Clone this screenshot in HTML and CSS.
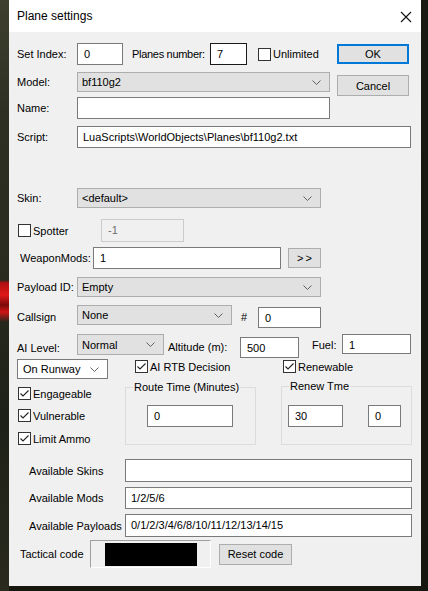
FILE: index.html
```html
<!DOCTYPE html>
<html>
<head>
<meta charset="utf-8">
<title>Plane settings</title>
<link rel="stylesheet" href="styles.css">
</head>
<body>
<div class="dialog">
  <div class="titlebar">
    <span class="title">Plane settings</span>
    <svg class="close" width="12" height="12" viewBox="0 0 12 12"><path d="M1 1 L11 11 M11 1 L1 11" stroke="#111" stroke-width="1.1" fill="none"/></svg>
  </div>
  <div class="content">
    <div class="row r-index">
      <span class="lbl w60">Set Index:</span>
      <div class="edit w46">0</div>
      <span class="lbl ml9 w78 tight">Planes number:</span>
      <div class="edit focus w37">7</div>
      <span class="chk ml11"></span><span class="lbl chklbl">Unlimited</span>
      <div class="btn default">OK</div>
    </div>
    <div class="row r-model">
      <span class="lbl w60">Model:</span>
      <div class="combo w253"><span>bf110g2</span><svg class="chev" width="9" height="5" viewBox="0 0 9 5"><path d="M0.5 0.5 L4.5 4.5 L8.5 0.5" stroke="#606060" fill="none"/></svg></div>
      <div class="btn cancel">Cancel</div>
    </div>
    <div class="row r-name">
      <span class="lbl w60">Name:</span>
      <div class="edit w253"></div>
    </div>
    <div class="row r-script">
      <span class="lbl w60">Script:</span>
      <div class="edit w334 pl5">LuaScripts\WorldObjects\Planes\bf110g2.txt</div>
    </div>
    <div class="row r-skin">
      <span class="lbl w60">Skin:</span>
      <div class="combo w244"><span>&lt;default&gt;</span><svg class="chev" width="9" height="5" viewBox="0 0 9 5"><path d="M0.5 0.5 L4.5 4.5 L8.5 0.5" stroke="#606060" fill="none"/></svg></div>
    </div>
    <div class="row r-spotter">
      <span class="chk ml1"></span><span class="lbl chklbl w68">Spotter</span>
      <div class="edit disabled w83">-1</div>
    </div>
    <div class="row r-mods">
      <span class="lbl ml3 w73">WeaponMods:</span>
      <div class="edit w188">1</div>
      <div class="btn more">&gt;&gt;</div>
    </div>
    <div class="row r-payload">
      <span class="lbl w60">Payload ID:</span>
      <div class="combo w244"><span>Empty</span><svg class="chev" width="9" height="5" viewBox="0 0 9 5"><path d="M0.5 0.5 L4.5 4.5 L8.5 0.5" stroke="#606060" fill="none"/></svg></div>
    </div>
    <div class="row r-callsign">
      <span class="lbl w60">Callsign</span>
      <div class="combo w155 top"><span>None</span><svg class="chev" width="9" height="5" viewBox="0 0 9 5"><path d="M0.5 0.5 L4.5 4.5 L8.5 0.5" stroke="#606060" fill="none"/></svg></div>
      <span class="lbl hash">#</span>
      <div class="edit w63 h21 bottom">0</div>
    </div>
    <div class="row r-ai">
      <span class="lbl w60 ailbl">AI Level:</span>
      <div class="combo w87 h21 top"><span>Normal</span><svg class="chev" width="9" height="5" viewBox="0 0 9 5"><path d="M0.5 0.5 L4.5 4.5 L8.5 0.5" stroke="#606060" fill="none"/></svg></div>
      <span class="lbl altlbl w72">Altitude (m):</span>
      <div class="edit w59 h21 bottom">500</div>
      <span class="lbl fuellbl w30">Fuel:</span>
      <div class="edit w69 h20 top">1</div>
    </div>
    <div class="lower">
      <div class="col-left">
        <div class="combo white w91"><span>On Runway</span><svg class="chev" width="9" height="5" viewBox="0 0 9 5"><path d="M0.5 0.5 L4.5 4.5 L8.5 0.5" stroke="#606060" fill="none"/></svg></div>
        <div class="check c-engage"><span class="chk on ml1"><svg width="11" height="11" viewBox="0 0 11 11"><path d="M1.5 5.5 L4 8 L9.5 2.5" stroke="#222" stroke-width="1.1" fill="none"/></svg></span><span class="lbl chklbl">Engageable</span></div>
        <div class="check c-vuln"><span class="chk on ml1"><svg width="11" height="11" viewBox="0 0 11 11"><path d="M1.5 5.5 L4 8 L9.5 2.5" stroke="#222" stroke-width="1.1" fill="none"/></svg></span><span class="lbl chklbl">Vulnerable</span></div>
        <div class="check c-ammo"><span class="chk on ml1"><svg width="11" height="11" viewBox="0 0 11 11"><path d="M1.5 5.5 L4 8 L9.5 2.5" stroke="#222" stroke-width="1.1" fill="none"/></svg></span><span class="lbl chklbl">Limit Ammo</span></div>
      </div>
      <div class="col-mid">
        <div class="check c-rtb"><span class="chk on"><svg width="11" height="11" viewBox="0 0 11 11"><path d="M1.5 5.5 L4 8 L9.5 2.5" stroke="#222" stroke-width="1.1" fill="none"/></svg></span><span class="lbl chklbl">AI RTB Decision</span></div>
        <div class="group g-route">
          <span class="legend">Route Time (Minutes)</span>
          <div class="edit w86 route-in">0</div>
        </div>
      </div>
      <div class="col-right">
        <div class="check c-renew"><span class="chk on"><svg width="11" height="11" viewBox="0 0 11 11"><path d="M1.5 5.5 L4 8 L9.5 2.5" stroke="#222" stroke-width="1.1" fill="none"/></svg></span><span class="lbl chklbl">Renewable</span></div>
        <div class="group g-renew">
          <span class="legend">Renew Tme</span>
          <div class="renew-inputs">
            <div class="edit w55">30</div>
            <div class="edit w33">0</div>
          </div>
        </div>
      </div>
    </div>
    <div class="row r-avskins">
      <span class="lbl ml12 w96">Available Skins</span>
      <div class="edit w287 h23"></div>
    </div>
    <div class="row r-avmods">
      <span class="lbl ml12 w96">Available Mods</span>
      <div class="edit w287 pl5">1/2/5/6</div>
    </div>
    <div class="row r-avpay">
      <span class="lbl ml12 w96">Available Payloads</span>
      <div class="edit w287 h23 pl5">0/1/2/3/4/6/8/10/11/12/13/14/15</div>
    </div>
    <div class="row r-tact">
      <span class="lbl ml3 w70">Tactical code</span>
      <div class="tactbox"><div class="tactcode"></div></div>
      <div class="btn reset">Reset code</div>
    </div>
  </div>
</div>
</body>
</html>
```
FILE: styles.css
```css
* { box-sizing: border-box; }
html, body { margin: 0; padding: 0; }
body {
  width: 428px;
  height: 591px;
  overflow: hidden;
  font-family: "Liberation Sans", Arial, sans-serif;
  font-size: 11px;
  color: #000;
  background:
    linear-gradient(to bottom, transparent 0, transparent 280px, #b01010 283px, #e01818 295px, #7a0a0a 305px, #d01414 312px, transparent 322px, transparent 100%) 0 0 / 9px 591px no-repeat,
    linear-gradient(to bottom, #3e3f2e 0, #2c2f22 120px, #2a2c20 260px, #1e2117 420px, #2a2a1e 591px) 0 0 / 9px 591px no-repeat,
    linear-gradient(to bottom, #1a1a12 0, #17160f 591px);
}
.dialog {
  margin-left: 9px;
  width: 412px;
  height: 586px;
  background: #f0f0f0;
  display: flex;
  flex-direction: column;
}
.titlebar {
  height: 32px;
  flex: none;
  background: #fff;
  display: flex;
  align-items: center;
  padding-left: 8px;
  padding-right: 9px;
}
.title { font-size: 12px; flex: 1; padding-bottom: 1px; }
.close { display: block; margin-top: 1px; }
.content {
  flex: 1;
  padding: 0 10px 0 8px;
  display: flex;
  flex-direction: column;
}
.row { display: flex; align-items: center; flex: none; }
.lbl { flex: none; white-space: nowrap; line-height: 14px; }
.tight { letter-spacing: -0.3px; }
.edit {
  flex: none;
  height: 22px;
  background: #fff;
  border: 1px solid #7a7a7a;
  padding-left: 6px;
  line-height: 20px;
  white-space: nowrap;
  overflow: hidden;
}
.edit.focus { border-color: #1a1a1a; }
.edit.disabled { background: #f0f0f0; border-color: #cccccc; color: #6d6d6d; }
.combo {
  flex: none;
  height: 20px;
  background: #e1e1e1;
  border: 1px solid #adadad;
  display: flex;
  align-items: center;
  justify-content: space-between;
  padding: 0 8px 0 4px;
  white-space: nowrap;
}
.combo.white { background: #fff; border-color: #7a7a7a; padding-left: 5px; }
.chev { display: block; flex: none; }
.btn {
  flex: none;
  background: #e1e1e1;
  border: 1px solid #adadad;
  display: flex;
  align-items: center;
  justify-content: center;
  white-space: nowrap;
}
.btn.default { width: 72px; height: 20px; border: 2px solid #0078d7; margin-left: auto; margin-right: 2px; }
.btn.cancel { width: 72px; height: 21px; margin-left: 7px; align-self: flex-start; margin-top: 3px; }
.btn.more { width: 33px; height: 20px; margin-left: 7px; font-size: 11px; letter-spacing: 2px; padding-left: 2px; }
.btn.reset { width: 73px; height: 21px; margin-left: 8px; }
.chk {
  flex: none;
  width: 13px;
  height: 13px;
  border: 1px solid #333;
  background: #fff;
  display: flex;
  align-items: center;
  justify-content: center;
}
.chk svg { display: block; }
.chklbl { margin-left: 2px; }
.check { display: flex; align-items: center; height: 13px; }
.top { align-self: flex-start; }
.bottom { align-self: flex-end; }

.ml1 { margin-left: 1px; }
.ml3 { margin-left: 3px; }
.ml9 { margin-left: 9px; }
.ml11 { margin-left: 11px; }
.ml12 { margin-left: 12px; }
.pl5 { padding-left: 5px; }
.h20 { height: 20px; }
.h21 { height: 21px; }
.h23 { height: 23px; }
.w30 { width: 30px; }
.w33 { width: 33px; }
.w37 { width: 37px; }
.w46 { width: 46px; }
.w55 { width: 55px; }
.w59 { width: 59px; }
.w60 { width: 60px; }
.w63 { width: 63px; }
.w68 { width: 68px; }
.w69 { width: 69px; }
.w70 { width: 70px; }
.w72 { width: 72px; }
.w73 { width: 73px; }
.w78 { width: 78px; }
.w83 { width: 83px; }
.w86 { width: 86px; }
.w87 { width: 87px; }
.w91 { width: 91px; }
.w96 { width: 96px; }
.w155 { width: 155px; }
.w188 { width: 188px; }
.w244 { width: 244px; }
.w253 { width: 253px; }
.w287 { width: 287px; }
.w334 { width: 334px; }

.r-index { margin-top: 11px; height: 22px; }
.r-model { margin-top: 7px; height: 20px; }
.r-name { margin-top: 5px; height: 22px; }
.r-script { margin-top: 7px; height: 22px; }
.r-skin { margin-top: 40px; height: 20px; }
.r-spotter { margin-top: 11px; height: 23px; }
.r-spotter .edit { height: 23px; }
.r-mods { margin-top: 5px; height: 22px; }
.r-payload { margin-top: 8px; height: 20px; }
.r-callsign { margin-top: 8px; height: 23px; }
.hash { margin-left: 9px; width: 17px; }
.r-ai { margin-top: 6px; height: 24px; }
.ailbl { align-self: flex-end; margin-bottom: 3px; }
.altlbl { margin-left: 4px; margin-top: 2px; }
.fuellbl { margin-left: 13px; margin-top: -2px; }

.lower { display: flex; flex: none; margin-top: 1px; height: 86px; }
.col-left { width: 91px; flex: none; display: flex; flex-direction: column; }
.c-engage { margin-top: 8px; }
.c-vuln { margin-top: 9px; }
.c-ammo { margin-top: 10px; }
.col-mid { width: 131px; margin-left: 17px; flex: none; display: flex; flex-direction: column; }
.col-right { width: 131px; margin-left: 25px; flex: none; display: flex; flex-direction: column; }
.c-rtb { margin-top: 1px; margin-left: 10px; }
.c-renew { margin-top: 1px; margin-left: 2px; }
.group {
  border: 1px solid #dcdcdc;
  position: relative;
  flex: none;
}
.g-route { margin-top: 14px; height: 58px; padding: 17px 0 0 21px; }
.g-renew { margin-top: 13px; height: 59px; padding: 18px 0 0 6px; }
.legend {
  position: absolute;
  top: -8px;
  left: 7px;
  background: #f0f0f0;
  padding: 0 1px;
  line-height: 14px;
  white-space: nowrap;
}
.renew-inputs { display: flex; gap: 25px; }

.r-avskins { margin-top: 14px; height: 23px; }
.r-avmods { margin-top: 5px; height: 22px; }
.r-avpay { margin-top: 5px; height: 23px; }
.r-tact { margin-top: 3px; height: 28px; }
.tactbox {
  flex: none;
  width: 121px;
  height: 28px;
  border-top: 1px solid #a0a0a0;
  border-left: 1px solid #a0a0a0;
  border-right: 1px solid #ffffff;
  border-bottom: 1px solid #ffffff;
  padding: 2px 13px 1px 14px;
}
.tactcode { width: 92px; height: 23px; background: #000; }
```
